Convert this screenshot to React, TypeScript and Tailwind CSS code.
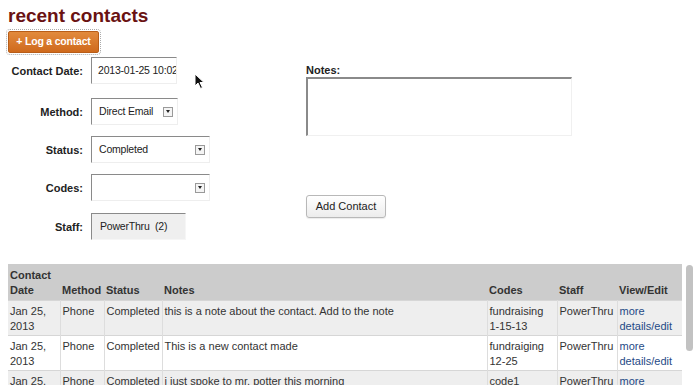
const rows = [
  {
    date: ["Jan 25,", "2013"],
    method: "Phone",
    status: "Completed",
    notes: "this is a note about the contact. Add to the note",
    codes: ["fundraising", "1-15-13"],
    staff: "PowerThru",
  },
  {
    date: ["Jan 25,", "2013"],
    method: "Phone",
    status: "Completed",
    notes: "This is a new contact made",
    codes: ["fundraiging", "12-25"],
    staff: "PowerThru",
  },
  {
    date: ["Jan 25,", "2013"],
    method: "Phone",
    status: "Completed",
    notes: "i just spoke to mr. potter this morning",
    codes: ["code1", ""],
    staff: "PowerThru",
  },
];

const SelectBox = ({ value, width }: { value: string; width: string }) => (
  <div
    className={`${width} h-[27px] flex items-center justify-between pl-[7px] pr-[4px] bg-white border-t border-l border-[#8a8a8a] border-r border-b border-r-[#eeeeee] border-b-[#eeeeee]`}
  >
    <span className="text-[10.5px] tracking-[-0.2px]">{value}</span>
    <span className="w-[10px] h-[10px] border border-[#9a9a9a] bg-[#f4f4f4] flex items-center justify-center">
      <span className="w-0 h-0 border-l-[2.5px] border-r-[2.5px] border-t-[3px] border-l-transparent border-r-transparent border-t-[#222]" />
    </span>
  </div>
);

const Field = ({ label, children, h }: { label: string; children: React.ReactNode; h: string }) => (
  <div className={`flex items-center ${h}`}>
    <div className="w-[75px] text-right font-bold text-[11px] text-[#222] pt-[2px]">{label}</div>
    <div className="ml-[8px]">{children}</div>
  </div>
);

const App = () => {
  return (
    <div
      className="w-[700px] h-[385px] overflow-hidden bg-white relative text-[#222]"
      style={{ fontFamily: '"Liberation Sans", Arial, sans-serif' }}
    >
      <div className="px-[8px]">
        <h1 className="text-[19px] font-bold text-[#6a1212] leading-[22px] pt-[5px]">recent contacts</h1>
        <button className="mt-[4px] w-[91px] h-[22px] rounded-[2px] bg-gradient-to-b from-[#e28a3c] to-[#cf6a1c] border border-[#b85d18] outline outline-1 outline-dotted outline-[#aaaaaa] outline-offset-[1px] text-white font-bold text-[10.5px] tracking-[-0.2px]">
          + Log a contact
        </button>

        <div className="flex mt-[4px]">
          <div className="w-[298px] text-[11px]">
            <Field label="Contact Date:" h="h-[27px]">
              <div className="w-[86px] h-[27px] flex items-center pl-[6px] overflow-hidden whitespace-nowrap bg-white border-t border-l border-[#8a8a8a] border-r border-b border-r-[#eeeeee] border-b-[#eeeeee] text-[10.5px] tracking-[-0.2px]">
                2013-01-25 10:02
              </div>
            </Field>
            <div className="mt-[14px]">
              <Field label="Method:" h="h-[27px]">
                <SelectBox value="Direct Email" width="w-[87px]" />
              </Field>
            </div>
            <div className="mt-[11px]">
              <Field label="Status:" h="h-[27px]">
                <SelectBox value="Completed" width="w-[119px]" />
              </Field>
            </div>
            <div className="mt-[11px]">
              <Field label="Codes:" h="h-[27px]">
                <SelectBox value="" width="w-[119px]" />
              </Field>
            </div>
            <div className="mt-[12px]">
              <Field label="Staff:" h="h-[27px]">
                <div className="w-[95px] h-[27px] flex items-center pl-[8px] bg-[#efefef] border-t border-l border-[#8a8a8a] border-r border-b border-r-[#f6f6f6] border-b-[#f6f6f6] text-[10.5px] tracking-[-0.2px]">
                  PowerThru&nbsp;&nbsp;(2)
                </div>
              </Field>
            </div>
          </div>

          <div className="flex flex-col">
            <div className="font-bold text-[11px] leading-[13px] mt-[7px]">Notes:</div>
            <div className="w-[266px] h-[59px] bg-white border-t-2 border-l-2 border-[#8a8a8a] border-r border-b border-r-[#f0f0f0] border-b-[#f0f0f0]" />
            <button className="mt-[59px] w-[80px] h-[23px] rounded-[3px] bg-gradient-to-b from-white to-[#ececec] border border-[#b8b8b8] text-[11px] text-[#222] shadow-[0_1px_1px_rgba(0,0,0,0.08)]">
              Add Contact
            </button>
          </div>
        </div>

        <div className="flex mt-[24px]">
          <table className="table-fixed w-[674px] border-collapse text-[11px] leading-[15px]">
            <colgroup>
              <col className="w-[52px]" />
              <col className="w-[44px]" />
              <col className="w-[58px]" />
              <col className="w-[325px]" />
              <col className="w-[70px]" />
              <col className="w-[60px]" />
              <col className="w-[65px]" />
            </colgroup>
            <thead>
              <tr className="bg-[#cccccc] text-[#333] font-bold h-[36px]">
                <th className="text-left align-bottom px-[2px] pb-[2px] font-bold">Contact<br />Date</th>
                <th className="text-left align-bottom px-[2px] pb-[2px] font-bold">Method</th>
                <th className="text-left align-bottom px-[2px] pb-[2px] font-bold">Status</th>
                <th className="text-left align-bottom px-[2px] pb-[2px] font-bold">Notes</th>
                <th className="text-left align-bottom px-[2px] pb-[2px] font-bold">Codes</th>
                <th className="text-left align-bottom px-[2px] pb-[2px] font-bold">Staff</th>
                <th className="text-left align-bottom px-[2px] pb-[2px] font-bold">View/Edit</th>
              </tr>
            </thead>
            <tbody>
              {rows.map((r, i) => (
                <tr key={i} className={`${i % 2 === 0 ? "bg-[#eeeeee]" : "bg-white"} border-t border-[#d6d6d6] h-[35px] text-[#333]`}>
                  <td className="align-top px-[2px] pt-[3px] border-r border-[#dddddd]">
                    {r.date[0]}<br />{r.date[1]}
                  </td>
                  <td className="align-top px-[2px] pt-[3px] border-r border-[#dddddd]">{r.method}</td>
                  <td className="align-top px-[2px] pt-[3px] border-r border-[#dddddd]">{r.status}</td>
                  <td className="align-top px-[2px] pt-[3px] border-r border-[#dddddd]">{r.notes}</td>
                  <td className="align-top px-[2px] pt-[3px] border-r border-[#dddddd]">
                    {r.codes[0]}<br />{r.codes[1]}
                  </td>
                  <td className="align-top px-[2px] pt-[3px] border-r border-[#dddddd]">{r.staff}</td>
                  <td className="align-top px-[2px] pt-[3px] text-[#1f4a86]">
                    more<br />details/edit
                  </td>
                </tr>
              ))}
            </tbody>
          </table>
          <div className="ml-[4px] w-[8px] pt-[1px]">
            <div className="w-[7px] h-[86px] rounded-full bg-[#c2c2c2]" />
          </div>
        </div>
      </div>

      <svg className="absolute left-[194px] top-[73px]" width="11" height="17" viewBox="0 0 11 17">
        <path d="M1 1 L1 13 L4 10 L6.5 15.5 L8.5 14.5 L6 9.5 L10 9.5 Z" fill="#111" stroke="#fff" strokeWidth="1" />
      </svg>
    </div>
  );
};

export default App;
